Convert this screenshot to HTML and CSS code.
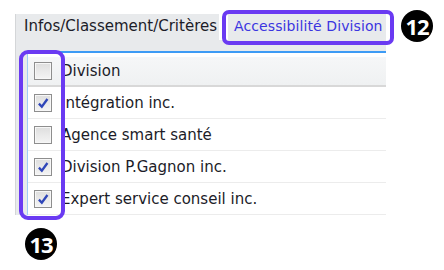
FILE: index.html
```html
<!DOCTYPE html>
<html lang="fr">
<head>
    <meta charset="UTF-8">
    <title>Accessibilité Division</title>
    <link rel="stylesheet" href="styles.css">
</head>
<body>

<div class="screen">
    <!-- Onglets -->
    <div class="tabs">
        <div class="tab">Infos/Classement/Critères</div>
        <div class="tab tab-active">Accessibilité Division</div>
    </div>

    <!-- Liste des divisions -->
    <div class="panel">
        <div class="list">
            <div class="row row-head">
                <span class="check"></span>
                <span class="label">Division</span>
            </div>
            <div class="row">
                <span class="check checked"><svg viewBox="0 0 12 12"><path d="M2.5 6.5 L5 9.2 L9.8 2.6" /></svg></span>
                <span class="label">Intégration inc.</span>
            </div>
            <div class="row">
                <span class="check"></span>
                <span class="label">Agence smart santé</span>
            </div>
            <div class="row">
                <span class="check checked"><svg viewBox="0 0 12 12"><path d="M2.5 6.5 L5 9.2 L9.8 2.6" /></svg></span>
                <span class="label">Division P.Gagnon inc.</span>
            </div>
            <div class="row">
                <span class="check checked"><svg viewBox="0 0 12 12"><path d="M2.5 6.5 L5 9.2 L9.8 2.6" /></svg></span>
                <span class="label">Expert service conseil inc.</span>
            </div>
        </div>
    </div>

    <!-- Annotations -->
    <div class="mark mark-tab"></div>
    <div class="mark mark-col"></div>
    <div class="badge badge-12">12</div>
    <div class="badge badge-13">13</div>
</div>

</body>
</html>
```

FILE: styles.css
```css
* {
    margin: 0;
    padding: 0;
    box-sizing: border-box;
}
body {
    font-family: "DejaVu Sans", Verdana, sans-serif;
    background: #fff;
    color: #1c1c28;
}
.screen {
    position: relative;
    width: 444px;
    height: 270px;
    padding: 14px 0 0 15px;
}
.tabs {
    display: flex;
    gap: 9px;
    width: 371px;
    height: 26px;
    font-size: 15px;
}
.tab {
    background: #e8eaec;
    border-left: 1px solid #d4d6d8;
    padding: 3px 0 0 8px;
    width: 204px;
    white-space: nowrap;
}
.tab-active {
    flex: 1;
    color: #3b35e0;
    border-left: none;
    padding: 4px 0 0 6px;
    font-size: 14px;
    letter-spacing: 0.1px;
}
.panel {
    width: 371px;
    background: #e8eaec;
    border-left: 1px solid #d4d6d8;
    padding: 11px 0 0 11px;
}
.list {
    background: #fff;
    border-top: 2px solid #3d9bf5;
    border-left: 1px solid #9fcdf7;
}
.row {
    display: flex;
    align-items: center;
    height: 32px;
    border-bottom: 1px solid #ececec;
    font-size: 15px;
}
.row-head {
    height: 30px;
    margin-top: 4px;
    background: linear-gradient(#f6f7f8, #eff1f2);
    border-bottom: 2px solid #d8d8d8;
}
.check {
    width: 18px;
    height: 18px;
    margin: 0 9px 0 6px;
    border: 1px solid #8e8e8e;
    background: linear-gradient(#dedede, #f4f4f4);
    box-shadow: inset 0 0 0 1px #f7f7f7;
    display: flex;
    align-items: center;
    justify-content: center;
}
.check svg {
    width: 14px;
    height: 14px;
    fill: none;
    stroke: #2f46b8;
    stroke-width: 2;
}
.mark {
    position: absolute;
    border: 4px solid #6a3af2;
}
.mark-tab {
    left: 222px;
    top: 10px;
    width: 172px;
    height: 35px;
    border-radius: 7px;
}
.mark-col {
    left: 19px;
    top: 50px;
    width: 46px;
    height: 170px;
    border-radius: 9px;
}
.badge {
    position: absolute;
    width: 32px;
    height: 32px;
    border-radius: 50%;
    background: #000;
    color: #fff;
    font-family: "Open Sans", Arial, sans-serif;
    font-weight: bold;
    font-size: 22px;
    letter-spacing: -1px;
    display: flex;
    align-items: center;
    justify-content: center;
}
.badge-12 {
    left: 401px;
    top: 10px;
}
.badge-13 {
    left: 25px;
    top: 228px;
}
```
